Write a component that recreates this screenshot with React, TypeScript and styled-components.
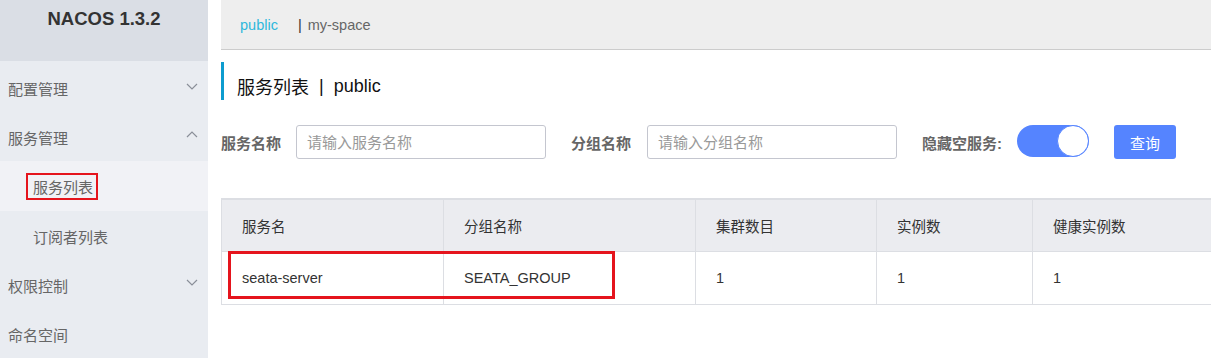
import * as React from 'react';
import styled, { createGlobalStyle } from 'styled-components';

const GlobalStyle = createGlobalStyle`
    html, body {
        margin: 0;
        padding: 0;
        background: #fff;
        overflow: hidden;
    }
    body {
        font-family: "Liberation Sans", "Noto Sans CJK SC", sans-serif;
        font-size: 14.5px;
        color: #333;
    }
`;

const Page = styled.div`
    display: flex;
    width: 1211px;
    height: 358px;
    overflow: hidden;
`;

const Sidebar = styled.aside`
    width: 208px;
    flex-shrink: 0;
    background-color: #e9ecf1;
    display: flex;
    flex-direction: column;
`;

const Logo = styled.div`
    height: 62px;
    margin-bottom: 2px;
    background-color: #dadee5;
    text-align: center;
    font-weight: bold;
    font-size: 18.5px;
    color: #333;
    padding-top: 8px;
    box-sizing: border-box;
`;

const MenuItem = styled.div<{ $sub?: boolean; $active?: boolean }>`
    height: 50px;
    display: flex;
    align-items: center;
    justify-content: space-between;
    padding: ${(p) => (p.$sub ? '2px 0 0 33px' : '2px 10px 0 8px')};
    color: #666;
    font-size: 15px;
    background-color: ${(p) => (p.$active ? '#f1f2f6' : 'transparent')};
    box-sizing: border-box;
`;

const Marked = styled.span`
    border: 2px solid #e5141d;
    padding: 1px 3px 1px 5px;
    margin-left: -7px;
`;

const Chevron = styled.svg`
    width: 12px;
    height: 12px;
    stroke: #8a8f99;
    fill: none;
    stroke-width: 1.2;
    margin-top: -6px;
`;

const Main = styled.main`
    flex: 1;
    padding-left: 13px;
    min-width: 0;
    overflow: hidden;
`;

const TopBar = styled.div`
    height: 49px;
    background-color: #eeeeee;
    border-bottom: 1px solid #cccccc;
    display: flex;
    align-items: center;
    padding-left: 19px;
    font-size: 14.5px;
`;

const Space = styled.span<{ $current?: boolean }>`
    color: ${(p) => (p.$current ? '#2eb8dc' : '#666')};
    margin-right: 20px;
`;

const Divider = styled.span`
    color: #333;
    margin-right: 6px;
`;

const Title = styled.h1`
    margin: 12px 0 0;
    height: 38px;
    border-left: 3px solid #0d9ccf;
    padding-left: 13px;
    display: flex;
    align-items: center;
    font-size: 18px;
    font-weight: normal;
    color: #111;
    padding-top: 10px;
    box-sizing: border-box;
`;

const TitleSep = styled.span`
    margin: 0 10px;
`;

const Filters = styled.div`
    display: flex;
    align-items: center;
    margin-top: 25px;
    height: 34px;
`;

const Label = styled.label<{ $gap: number }>`
    font-weight: bold;
    color: #666;
    font-size: 15px;
    margin-right: ${(p) => p.$gap}px;
`;

const Input = styled.input`
    width: 250px;
    height: 34px;
    box-sizing: border-box;
    border: 1px solid #c4c6cf;
    border-radius: 3px;
    padding: 0 10px;
    font-family: inherit;
    font-size: 15px;
    margin-right: 25px;
    outline: none;
    &::placeholder {
        color: #999;
    }
`;

const Switch = styled.div`
    width: 72px;
    height: 32px;
    border-radius: 16px;
    background-color: #5584ff;
    display: flex;
    justify-content: flex-end;
    align-items: center;
    box-sizing: border-box;
    margin-top: -2px;
    margin-right: 25px;
`;

const Knob = styled.div`
    width: 32px;
    height: 32px;
    border-radius: 50%;
    background: #fff;
    border: 1px solid #5584ff;
    box-sizing: border-box;
`;

const Button = styled.button`
    width: 62px;
    height: 34px;
    border: none;
    border-radius: 3px;
    background-color: #5584ff;
    color: #fff;
    font-family: inherit;
    font-size: 15px;
`;

const TableWrap = styled.div`
    position: relative;
    margin-top: 39px;
`;

const Table = styled.table`
    border-collapse: collapse;
    width: 1000px;
    table-layout: fixed;
    border: 1px solid #dcdee3;
`;

const Th = styled.th<{ $w: number }>`
    width: ${(p) => p.$w}px;
    box-sizing: border-box;
    height: 52px;
    background-color: #ebecf0;
    border: 1px solid #dcdee3;
    border-top-width: 2px;
    text-align: left;
    font-weight: normal;
    color: #333;
    padding: 0 0 0 20px;
`;

const Td = styled.td`
    height: 52px;
    border: 1px solid #dcdee3;
    padding: 0 0 0 20px;
    color: #333;
`;

const Highlight = styled.div`
    position: absolute;
    left: 7px;
    top: 53px;
    width: 387px;
    height: 48px;
    border: 3px solid #e5141d;
    box-sizing: border-box;
    pointer-events: none;
`;

const down = <polyline points="1,4 6,9 11,4" />;
const up = <polyline points="1,8 6,3 11,8" />;

const menu = [
    { label: '配置管理', icon: down },
    { label: '服务管理', icon: up },
    { label: '服务列表', sub: true, active: true, marked: true },
    { label: '订阅者列表', sub: true },
    { label: '权限控制', icon: down },
    { label: '命名空间' },
];

const columns = [
    { name: '服务名', w: 222 },
    { name: '分组名称', w: 252 },
    { name: '集群数目', w: 181 },
    { name: '实例数', w: 156 },
    { name: '健康实例数', w: 189 },
];

const rows = [['seata-server', 'SEATA_GROUP', '1', '1', '1']];

export default function App() {
    return (
        <>
            <GlobalStyle />
            <Page>
                <Sidebar>
                    <Logo>NACOS 1.3.2</Logo>
                    {menu.map((m) => (
                        <MenuItem key={m.label} $sub={m.sub} $active={m.active}>
                            {m.marked ? <Marked>{m.label}</Marked> : <span>{m.label}</span>}
                            {m.icon && <Chevron viewBox="0 0 12 12">{m.icon}</Chevron>}
                        </MenuItem>
                    ))}
                </Sidebar>
                <Main>
                    <TopBar>
                        <Space $current>public</Space>
                        <Divider>|</Divider>
                        <Space>my-space</Space>
                    </TopBar>
                    <Title>
                        服务列表<TitleSep>|</TitleSep>public
                    </Title>
                    <Filters>
                        <Label $gap={15}>服务名称</Label>
                        <Input placeholder="请输入服务名称" />
                        <Label $gap={16}>分组名称</Label>
                        <Input placeholder="请输入分组名称" />
                        <Label $gap={15}>隐藏空服务:</Label>
                        <Switch>
                            <Knob />
                        </Switch>
                        <Button>查询</Button>
                    </Filters>
                    <TableWrap>
                        <Table>
                            <thead>
                                <tr>
                                    {columns.map((c) => (
                                        <Th key={c.name} $w={c.w}>{c.name}</Th>
                                    ))}
                                </tr>
                            </thead>
                            <tbody>
                                {rows.map((r, i) => (
                                    <tr key={i}>
                                        {r.map((v, j) => (
                                            <Td key={j}>{v}</Td>
                                        ))}
                                    </tr>
                                ))}
                            </tbody>
                        </Table>
                        <Highlight />
                    </TableWrap>
                </Main>
            </Page>
        </>
    );
}
